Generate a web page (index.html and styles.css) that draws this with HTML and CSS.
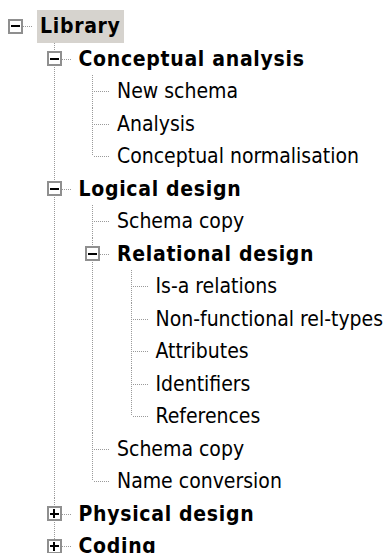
FILE: index.html
```html
<!DOCTYPE html>
<html lang="en">
<head>
    <meta charset="UTF-8">
    <meta name="viewport" content="width=device-width, initial-scale=1.0">
    <title>Library tree</title>
    <link rel="stylesheet" href="styles.css">
</head>
<body>
    <ul class="tree">
        <li class="root">
            <div class="row"><span class="toggle open"></span><span class="label bold selected">Library</span></div>
            <ul>
                <li>
                    <div class="row"><span class="toggle open"></span><span class="label bold">Conceptual analysis</span></div>
                    <ul>
                        <li><div class="row"><span class="label">New schema</span></div></li>
                        <li><div class="row"><span class="label">Analysis</span></div></li>
                        <li><div class="row"><span class="label">Conceptual normalisation</span></div></li>
                    </ul>
                </li>
                <li>
                    <div class="row"><span class="toggle open"></span><span class="label bold">Logical design</span></div>
                    <ul>
                        <li><div class="row"><span class="label">Schema copy</span></div></li>
                        <li>
                            <div class="row"><span class="toggle open"></span><span class="label bold">Relational design</span></div>
                            <ul>
                                <li><div class="row"><span class="label">Is-a relations</span></div></li>
                                <li><div class="row"><span class="label">Non-functional rel-types</span></div></li>
                                <li><div class="row"><span class="label">Attributes</span></div></li>
                                <li><div class="row"><span class="label">Identifiers</span></div></li>
                                <li><div class="row"><span class="label">References</span></div></li>
                            </ul>
                        </li>
                        <li><div class="row"><span class="label">Schema copy</span></div></li>
                        <li><div class="row"><span class="label">Name conversion</span></div></li>
                    </ul>
                </li>
                <li>
                    <div class="row"><span class="toggle closed"></span><span class="label bold">Physical design</span></div>
                </li>
                <li>
                    <div class="row"><span class="toggle closed"></span><span class="label bold">Coding</span></div>
                </li>
            </ul>
        </li>
    </ul>
</body>
</html>
```

FILE: styles.css
```css
body {
    margin: 0;
    padding: 0;
    background: #fff;
    font-family: "DejaVu Sans Condensed", "DejaVu Sans", sans-serif;
    font-size: 21px;
    color: #000;
    overflow: hidden;
}
.tree {
    list-style: none;
    margin: 0;
    padding: 10px 0 0 0;
}
.tree ul {
    list-style: none;
    margin: 0 0 0 38.5px;
    padding: 0;
}
.tree li {
    position: relative;
}
/* dotted connector lines */
.tree ul li::before {
    content: "";
    position: absolute;
    left: 15px;
    top: 0;
    bottom: 0;
    width: 1px;
    background: repeating-linear-gradient(to bottom, #9a9a9a 0 1px, transparent 1px 2px);
}
.tree ul li:last-child::before {
    bottom: auto;
    height: 16px;
}
.tree li::after {
    content: "";
    position: absolute;
    left: 16px;
    top: 16px;
    width: 17px;
    height: 1px;
    background: repeating-linear-gradient(to right, transparent 0 1px, #9a9a9a 1px 2px);
}
.row {
    display: flex;
    align-items: center;
    height: 32.5px;
    padding-left: 8px;
    white-space: nowrap;
}
.toggle {
    position: relative;
    z-index: 1;
    box-sizing: border-box;
    width: 15px;
    height: 15px;
    margin-right: 14px;
    border: 2px solid #8f8f8f;
    background: #fff;
    display: flex;
    align-items: center;
    justify-content: center;
}
.toggle::before {
    content: "";
    width: 9px;
    height: 2px;
    background: #000;
}
.toggle.closed::after {
    content: "";
    position: absolute;
    width: 2px;
    height: 9px;
    background: #000;
}
.label {
    position: relative;
    z-index: 1;
    display: flex;
    align-items: center;
    height: 100%;
    padding: 0 3px;
    margin-left: 29px;
}
.toggle + .label {
    margin-left: 0;
}
.bold {
    font-weight: bold;
    letter-spacing: 0.7px;
}
.selected {
    background: #d6d3ce;
}
```
